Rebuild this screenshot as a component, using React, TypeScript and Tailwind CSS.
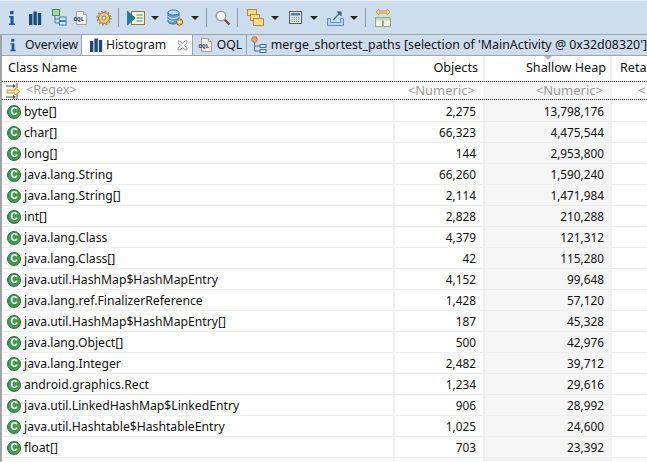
const rows = [
  ['byte[]', '2,275', '13,798,176'],
  ['char[]', '66,323', '4,475,544'],
  ['long[]', '144', '2,953,800'],
  ['java.lang.String', '66,260', '1,590,240'],
  ['java.lang.String[]', '2,114', '1,471,984'],
  ['int[]', '2,828', '210,288'],
  ['java.lang.Class', '4,379', '121,312'],
  ['java.lang.Class[]', '42', '115,280'],
  ['java.util.HashMap$HashMapEntry', '4,152', '99,648'],
  ['java.lang.ref.FinalizerReference', '1,428', '57,120'],
  ['java.util.HashMap$HashMapEntry[]', '187', '45,328'],
  ['java.lang.Object[]', '500', '42,976'],
  ['java.lang.Integer', '2,482', '39,712'],
  ['android.graphics.Rect', '1,234', '29,616'],
  ['java.util.LinkedHashMap$LinkedEntry', '906', '28,992'],
  ['java.util.Hashtable$HashtableEntry', '1,025', '24,600'],
  ['float[]', '703', '23,392'],
  ['', '', ''], // next row, only its icon top shows
];

function InfoIcon() {
  return (
    <svg width="16" height="16" viewBox="0 0 16 16">
      <rect x="6" y="1" width="3.6" height="3.2" fill="#1b5a9a" />
      <path d="M5 6h4.6v7.5H11V15H5v-1.5h1.5V7.5H5z" fill="#1b5a9a" />
    </svg>
  );
}

function BarsIcon() {
  return (
    <svg width="16" height="16" viewBox="0 0 16 16">
      <rect x="2" y="4" width="3.4" height="11" fill="#1d4a7e" />
      <rect x="6.4" y="1.5" width="3.4" height="13.5" fill="#1d4a7e" />
      <rect x="10.8" y="3" width="3.4" height="12" fill="#1d4a7e" />
    </svg>
  );
}

function TreeIcon() {
  return (
    <svg width="16" height="17" viewBox="0 0 16 17">
      <rect x="1.5" y="0.5" width="7" height="6" fill="#a9d8a0" stroke="#3f8f4f" />
      <path d="M4 7v7h4M4 10h4" fill="none" stroke="#5a7f9f" />
      <rect x="8.5" y="8" width="6.5" height="3.5" fill="#d6e8f8" stroke="#3f7fbf" />
      <rect x="8.5" y="12.5" width="6.5" height="3.5" fill="#d6e8f8" stroke="#3f7fbf" />
    </svg>
  );
}

function OqlIcon() {
  return (
    <svg width="16" height="16" viewBox="0 0 16 16">
      <path d="M3.5 1.5h7l3 3v10h-10z" fill="#f3efe6" stroke="#a89f94" />
      <path d="M10.5 1.5v3h3" fill="#ddd6c8" stroke="#a89f94" />
      <text x="0.5" y="10.5" fontSize="6" fontWeight="700" fill="#1e3a6e" fontFamily="Liberation Mono, monospace">OQL</text>
    </svg>
  );
}

function GearIcon() {
  return (
    <svg width="16" height="16" viewBox="0 0 16 16">
      <circle cx="8" cy="8" r="5.5" fill="#e8c88a" stroke="#a0703a" strokeWidth="1" />
      <circle cx="8" cy="8" r="6.8" fill="none" stroke="#b5824a" strokeWidth="1.6" strokeDasharray="1.8 1.8" />
      <circle cx="8" cy="8" r="2" fill="#fff4dc" stroke="#a0703a" />
    </svg>
  );
}

function PlayListIcon() {
  return (
    <svg width="18" height="16" viewBox="0 0 18 16">
      <rect x="4.5" y="1.5" width="13" height="13" fill="#f4f0dc" stroke="#8a7a4a" />
      <path d="M9.5 5h6M9.5 8h6M9.5 11h6" stroke="#3f9f5f" />
      <path d="M0.5 1l7.5 7-7.5 7z" fill="#1f7fa0" stroke="#104f70" strokeWidth="0.6" />
    </svg>
  );
}

function DbIcon() {
  return (
    <svg width="18" height="18" viewBox="0 0 18 18">
      <path d="M1 3.5v9c0 1.4 2.4 2.5 5.5 2.5S12 13.9 12 12.5v-9z" fill="#5f9fd8" stroke="#2f6fa8" />
      <ellipse cx="6.5" cy="3.5" rx="5.5" ry="2.5" fill="#bcdcf4" stroke="#2f6fa8" />
      <path d="M1 7c0 1.4 2.4 2.5 5.5 2.5S12 8.4 12 7M1 10c0 1.4 2.4 2.5 5.5 2.5" fill="none" stroke="#dcecf8" />
      <circle cx="12.5" cy="13" r="3.2" fill="#e8b850" stroke="#a07020" />
      <circle cx="12.5" cy="13" r="1" fill="#fff" />
    </svg>
  );
}

function SearchIcon() {
  return (
    <svg width="16" height="16" viewBox="0 0 16 16">
      <path d="M9.5 9.5l5 5" stroke="#7a4a4a" strokeWidth="2.4" />
      <circle cx="6" cy="6" r="4.8" fill="#eef3f4" stroke="#a0a0a0" strokeWidth="1.4" />
    </svg>
  );
}

function CopiesIcon() {
  return (
    <svg width="17" height="17" viewBox="0 0 17 17">
      <rect x="0.5" y="0.5" width="9" height="6" fill="#f5d98a" stroke="#b88a30" />
      <rect x="3.5" y="5.5" width="9" height="6" fill="#f5d98a" stroke="#b88a30" />
      <rect x="6.5" y="9.5" width="10" height="7" fill="#f5d98a" stroke="#b88a30" />
    </svg>
  );
}

function CalcIcon() {
  return (
    <svg width="13" height="13" viewBox="0 0 13 13">
      <rect x="0.5" y="0.5" width="12" height="12" fill="#e6e6da" stroke="#56604f" />
      <rect x="2" y="2" width="9" height="2.5" fill="#3f7fbf" />
      <path d="M2.5 6.5h8M2.5 8.5h8M2.5 10.5h8" stroke="#5f8fb5" strokeDasharray="1.2 1" />
    </svg>
  );
}

function ExportIcon() {
  return (
    <svg width="17" height="16" viewBox="0 0 17 16">
      <path d="M0.5 8.5h3v4h10v-4h3v7h-16z" fill="#bcd4ec" stroke="#5f8fbf" />
      <path d="M6 10l6-6" stroke="#2f6fa8" strokeWidth="1.2" />
      <path d="M9.5 1.5h5v5z" fill="#1f5f9e" />
    </svg>
  );
}

function SwapIcon() {
  return (
    <svg width="16" height="20" viewBox="0 0 16 20">
      <path d="M1 4l3-3v2h8V1l3 3-3 3V5H4v2z" fill="#f5d98a" stroke="#b88a30" strokeWidth="0.8" />
      <rect x="0.5" y="9.5" width="7" height="9" fill="#eef3e4" stroke="#9aa88a" />
      <rect x="8.5" y="9.5" width="7" height="9" fill="#eef3e4" stroke="#9aa88a" />
      <rect x="1" y="10" width="14" height="2.5" fill="#c8d8b0" />
    </svg>
  );
}

function PathsIcon() {
  return (
    <svg width="16" height="18" viewBox="0 0 16 18">
      <circle cx="3.5" cy="3.5" r="2.8" fill="#f2a65a" stroke="#c0702a" />
      <path d="M3.5 6v9M3.5 10h5M3.5 15h5" fill="none" stroke="#4a6f8f" />
      <rect x="9" y="8.5" width="6" height="3" fill="#d6e8f8" stroke="#3f6f9f" />
      <rect x="9" y="13.5" width="6" height="3" fill="#d6e8f8" stroke="#3f6f9f" />
    </svg>
  );
}

function FilterIcon() {
  return (
    <svg width="16" height="16" viewBox="0 0 16 16">
      <path d="M0 3h9M0 14h9" stroke="#555" />
      <path d="M7 1l3 2-3 2zM7 12l3 2-3 2z" fill="#555" />
      <path d="M11 0v5M11 11v5" stroke="#555" />
      <path d="M1 7h8V5l5 3.5L9 12v-2H1z" fill="#f5e4a8" stroke="#c8962e" />
    </svg>
  );
}

function ClassIcon() {
  return (
    <span className="w-[14px] h-[14px] rounded-full bg-[#3c9a4a] border border-[#2a7a38] flex items-center justify-center text-white text-[10px] font-bold leading-none shrink-0 font-['Liberation_Sans',sans-serif]">
      C
    </span>
  );
}

function Arrow() {
  return <span className="block w-0 h-0 border-x-4 border-x-transparent border-t-4 border-t-[#222]" />;
}

function Sep() {
  return <span className="block w-px h-[19px] bg-[#8a98a6]" />;
}

export default function App() {
  return (
    <div className="w-[647px] h-[462px] overflow-hidden bg-white text-[12.2px] text-[#111] font-['Noto_Sans','Liberation_Sans',sans-serif] flex flex-col">
      <div className="h-[34px] bg-[#cddded] flex items-center shrink-0 border-t border-[#e8eef5] pl-[4px]">
        <div className="flex items-center gap-[7px]">
          <InfoIcon />
          <BarsIcon />
          <div className="ml-px"><TreeIcon /></div>
          <div className="-ml-px"><OqlIcon /></div>
          <GearIcon />
        </div>
        <div className="ml-[6px]"><Sep /></div>
        <div className="ml-[8px]"><PlayListIcon /></div>
        <div className="ml-[6px]"><Arrow /></div>
        <div className="ml-[8px]"><DbIcon /></div>
        <div className="ml-[6px]"><Arrow /></div>
        <div className="ml-[7px]"><Sep /></div>
        <div className="ml-[8px]"><SearchIcon /></div>
        <div className="ml-[6px]"><Sep /></div>
        <div className="ml-[9px]"><CopiesIcon /></div>
        <div className="ml-[7px]"><Arrow /></div>
        <div className="ml-[10px]"><CalcIcon /></div>
        <div className="ml-[8px]"><Arrow /></div>
        <div className="ml-[9px]"><ExportIcon /></div>
        <div className="ml-[6px]"><Arrow /></div>
        <div className="ml-[7px]"><Sep /></div>
        <div className="ml-[9px]"><SwapIcon /></div>
      </div>

      <div className="h-[22px] bg-[#cddded] flex items-stretch shrink-0 border-t border-[#a0a4a8] border-b border-b-[#a0a4a8] whitespace-nowrap overflow-hidden">
        <div className="w-[2px] bg-[#a0a4a8]" />
        <div className="w-[80px] flex items-center gap-[5px] pl-[4px] border-r border-[#a0a4a8] rounded-tl-[3px]">
          <span className="w-[14px] flex justify-center"><InfoIcon /></span>
          <span>Overview</span>
        </div>
        <div className="w-[111px] bg-white flex items-center gap-[2px] pl-[6px] border-r border-[#a0a4a8]">
          <BarsIcon />
          <span>Histogram</span>
          <svg className="ml-[9px]" width="11" height="11" viewBox="0 0 11 11">
            <path d="M1 1h2l2.5 2.5L8 1h2v2L7.5 5.5 10 8v2H8L5.5 7.5 3 10H1V8l2.5-2.5L1 3z" fill="#fff" stroke="#8c8c8c" strokeWidth="0.8" />
          </svg>
        </div>
        <div className="w-[54px] flex items-center gap-[3px] pl-[5px] border-r border-[#a0a4a8]">
          <OqlIcon />
          <span>OQL</span>
        </div>
        <div className="flex-1 flex items-center gap-[4px] pl-[4px] text-[12.4px]">
          <PathsIcon />
          <span>merge_shortest_paths [selection of 'MainActivity @ 0x32d08320']</span>
        </div>
      </div>

      <div className="flex-1 border-l-2 border-[#a0a4a8] flex flex-col">
        <div className="h-[25px] flex items-center shrink-0 text-[12.6px]">
          <div className="w-[391px] pl-[6px]">Class Name</div>
          <div className="w-[90px] self-stretch flex items-center justify-end pr-[5px] border-l-2 border-[#eceef2]">Objects</div>
          <div className="w-[129px] relative self-stretch flex items-center justify-end pr-[4px] border-x-2 border-[#eceef2]">
            <span className="absolute top-0 left-[59px] w-0 h-0 border-x-4 border-x-transparent border-t-4 border-t-[#b5b5b5]" />
            Shallow Heap
          </div>
          <div className="flex-1 pl-[8px] overflow-hidden whitespace-nowrap">Retained</div>
        </div>

        <div className="h-[19px] flex items-center shrink-0 border-y border-dotted border-[#222] text-[#9a9a9a] text-[13px]">
          <div className="w-[391px] flex items-center gap-[4px] pl-[4px] text-[12.6px]">
            <FilterIcon />
            <span>&lt;Regex&gt;</span>
          </div>
          <div className="w-[90px] text-right pr-[8px]">&lt;Numeric&gt;</div>
          <div className="w-[129px] pr-[9px] bg-[#f5f5f5] self-stretch flex items-center justify-end">&lt;Numeric&gt;</div>
          <div className="flex-1 pl-[26px] overflow-hidden whitespace-nowrap">&lt;</div>
        </div>

        <div className="h-px shrink-0" />

        {rows.map((row) => (
          <div key={row[0]} className="h-[21px] flex items-stretch shrink-0 border-b border-[#eceef2]">
            <div className="w-[391px] flex items-center gap-[3px] pl-[5px] pt-[2px]">
              <ClassIcon />
              <span>{row[0]}</span>
            </div>
            <div className="w-[90px] flex items-center justify-end pr-[7px] pt-[2px] border-l-2 border-[#eceef2] text-[11.8px]">{row[1]}</div>
            <div className="w-[129px] flex items-center justify-end pr-[6px] pt-[2px] bg-[#f5f5f5] border-x-2 border-[#eceef2] text-[11.8px]">{row[2]}</div>
            <div className="flex-1" />
          </div>
        ))}
      </div>
    </div>
  );
}
